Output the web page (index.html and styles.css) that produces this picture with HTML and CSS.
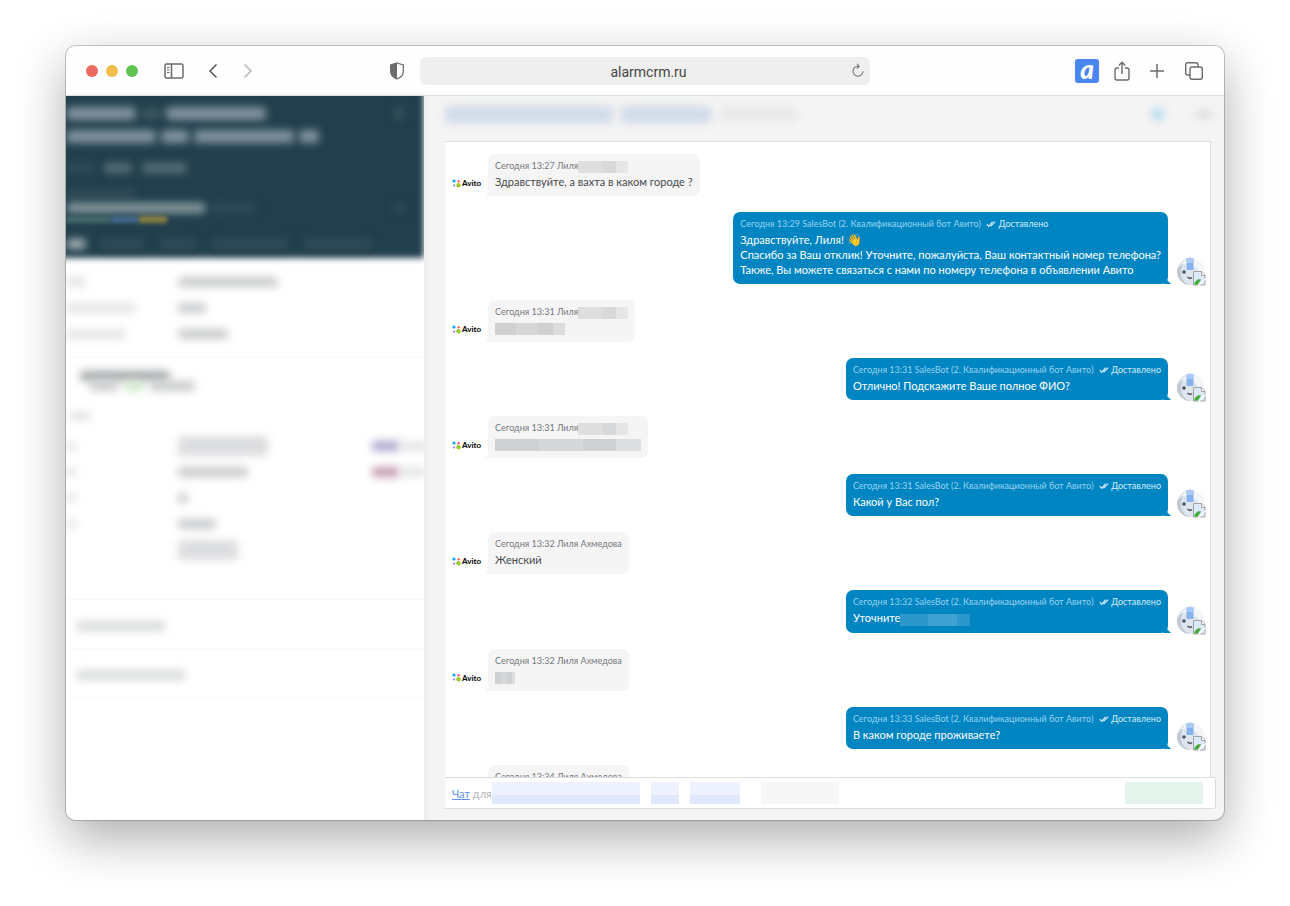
FILE: index.html
```html
<!DOCTYPE html>
<html lang="ru">
<head>
    <meta charset="utf-8">
    <title>alarmcrm.ru</title>
    <link rel="stylesheet" href="styles.css">
</head>
<body>
    <!-- shared icons -->
    <svg class="sprite" aria-hidden="true">
        <symbol id="avito" viewBox="0 0 9 9">
            <circle cx="2" cy="2" r="1.6" fill="#0af"/>
            <circle cx="6.6" cy="2.2" r="1.3" fill="#ff6163"/>
            <circle cx="2.1" cy="6.4" r="1" fill="#965eeb"/>
            <circle cx="6.5" cy="6.3" r="2.2" fill="#97cf26"/>
        </symbol>
        <symbol id="checks" viewBox="0 0 10 8">
            <path d="M.8 4.200l1.900 2.200L6.600 1.600M4.500 6.200L9.200 1.600" fill="none" stroke="currentColor" stroke-width="1.200"/>
        </symbol>
        <symbol id="robot" viewBox="0 0 30 30">
            <circle cx="14.500" cy="15.500" r="13.500" fill="#dfe5ec"/>
            <path d="M14 2a13 13 0 0 1 14 13c0 3-1 5-2 7C24 12 18 8 6 8c2-3 5-6 8-6z" fill="#f3f5f8"/>
            <path d="M1 15a13.500 13.500 0 0 0 13 14c-6-2-9-6-9-13 0-3 1-6 2-8-4 2-6 4-6 7z" fill="#c0cad5"/>
            <path d="M14 0l3 3h-6z" fill="#e3e8ee"/>
            <rect x="10.500" y="2" width="7" height="12" rx="1" fill="#86b2ee"/>
            <rect x="10.500" y="2" width="7" height="5" rx="1" fill="#a9caf5"/>
            <circle cx="8" cy="16" r="1.800" fill="#4a5663"/>
            <path d="M11.500 21q2.500 2.500 4.500.5" fill="none" stroke="#4a5663" stroke-width="1.500"/>
            <path d="M17.500 15.500h8l3.500 3.500v10h-11.500z" fill="#dce9fb" stroke="#a3a3a3"/>
            <path d="M25.500 15.500v4H29" fill="#fff" stroke="#a3a3a3"/>
            <path d="M18 28.500c1-4 4-6 7-5l-3 5z" fill="#47ab3b"/>
            <path d="M22.500 29.500l7-7" stroke="#fff" stroke-width="1.500"/>
        </symbol>
    </svg>

    <div class="window">
        <header class="toolbar">
            <div class="tools tools-left">
                <span class="dots"><i class="red"></i><i class="yellow"></i><i class="green"></i></span>
                <button type="button" class="tool sidebar-btn" aria-label="Боковая панель">
                    <svg width="20" height="16" viewBox="0 0 20 16" fill="none" stroke="#6b6b6b" stroke-width="1.500"><rect x="1" y="1" width="18" height="14" rx="1.500"/><path d="M7.500 1v14"/><path d="M3 4.500h2.500M3 7h2.500M3 9.500h2.500" stroke-width="1"/></svg>
                </button>
                <button type="button" class="tool back-btn" aria-label="Назад">
                    <svg width="10" height="16" viewBox="0 0 10 16" fill="none" stroke="#5c5c5c" stroke-width="1.600"><path d="M8.500 1.500L2 8l6.500 6.500"/></svg>
                </button>
                <button type="button" class="tool" aria-label="Вперёд">
                    <svg width="10" height="16" viewBox="0 0 10 16" fill="none" stroke="#b9b9b9" stroke-width="1.600"><path d="M1.500 1.500L8 8l-6.500 6.500"/></svg>
                </button>
                <button type="button" class="tool shield-btn" aria-label="Защита">
                    <svg width="14" height="18" viewBox="0 0 14 18"><path d="M7 1l6.300 2v6.500c0 3.500-2.500 6-6.300 7.500C3.200 15.500.7 13 .7 9.500V3z" fill="#fff" stroke="#6b6b6b" stroke-width="1.300"/><path d="M7 1L.7 3v6.500C.7 13 3.200 15.500 7 17z" fill="#6b6b6b"/></svg>
                </button>
            </div>
            <div class="address">
                <input type="text" value="alarmcrm.ru" aria-label="Адрес">
                <button type="button" class="tool reload" aria-label="Обновить">
                    <svg width="12" height="14" viewBox="0 0 12 14" fill="none" stroke="#757575" stroke-width="1.100"><path d="M7 3.200H6a5 5 0 1 0 5 5"/><path d="M4.800.8L7.300 3.200 4.800 5.700"/></svg>
                </button>
            </div>
            <div class="tools tools-right">
                <button type="button" class="tool ext" aria-label="Расширение">a</button>
                <button type="button" class="tool" aria-label="Поделиться">
                    <svg width="16" height="20" viewBox="0 0 16 20" fill="none" stroke="#6b6b6b" stroke-width="1.400"><path d="M5 7H3a2 2 0 0 0-2 2v8a2 2 0 0 0 2 2h10a2 2 0 0 0 2-2V9a2 2 0 0 0-2-2h-2M8 13V1.500M4.800 4.500L8 1.300l3.200 3.200"/></svg>
                </button>
                <button type="button" class="tool plus-btn" aria-label="Новая вкладка">
                    <svg width="14" height="14" viewBox="0 0 14 14" stroke="#6b6b6b" stroke-width="1.500"><path d="M7 0v14M0 7h14"/></svg>
                </button>
                <button type="button" class="tool" aria-label="Вкладки">
                    <svg width="18" height="18" viewBox="0 0 18 18" fill="none" stroke="#6b6b6b" stroke-width="1.400"><rect x="5" y="5" width="12.300" height="12.300" rx="2"/><path d="M5 13H2.700a2 2 0 0 1-2-2V2.700a2 2 0 0 1 2-2H11a2 2 0 0 1 2 2V5"/></svg>
                </button>
            </div>
        </header>

        <div class="page">
            <aside class="card">
                <div class="card-head">
                    <div class="line title"><i class="w70"></i><i class="w20 dim"></i><i class="w100"></i><i class="w10 dim end"></i></div>
                    <div class="line title"><i class="w90"></i><i class="w30"></i><i class="w100"></i><i class="w20"></i></div>
                    <div class="line tags"><i class="w30 dim"></i><i class="w30"></i><i class="w45"></i></div>
                    <div class="line small"><i class="w70 dim"></i></div>
                    <div class="line step"><i class="w140"></i><i class="w45 dim"></i><i class="w10 dim end"></i></div>
                    <div class="stages"><i class="w45 teal"></i><i class="w30 blue"></i><i class="w30 gold"></i></div>
                    <div class="line tabs"><i class="w20 active"></i><i class="w45 dim"></i><i class="w40 dim"></i><i class="w80 dim"></i><i class="w70 dim"></i></div>
                </div>
                <div class="fields">
                    <div class="field"><i class="w20 dim"></i><i class="w100"></i></div>
                    <div class="field"><i class="w70 dim"></i><i class="w30"></i></div>
                    <div class="field"><i class="w60 dim"></i><i class="w50"></i></div>
                </div>
                <div class="contact">
                    <div class="contact-name"><i class="w90 dark"></i></div>
                    <div class="contact-sub"><i class="w30"></i><i class="w20 lime"></i><i class="w45"></i></div>
                    <div class="contact-tab"><i class="w20 dim"></i></div>
                    <div class="field"><i class="w10 dim"></i><i class="w90 tall"></i><i class="w30 violet"></i><i class="w30 dim"></i></div>
                    <div class="field"><i class="w10 dim"></i><i class="w70"></i><i class="w30 plum"></i><i class="w30 dim"></i></div>
                    <div class="field"><i class="w10 dim"></i><i class="w10"></i></div>
                    <div class="field"><i class="w10 dim"></i><i class="w40"></i></div>
                    <div class="field"><span></span><i class="w60 tall"></i></div>
                </div>
                <div class="add"><i class="w90"></i></div>
                <div class="add"><i class="w110"></i></div>
            </aside>

            <main class="feed">
                <div class="filter">
                    <i class="w170 sky"></i><i class="w90 sky"></i><i class="w80"></i>
                    <i class="spot"></i><i class="more"></i>
                </div>

                <div class="messages">
                    <div class="msg in">
                        <span class="source"><svg width="9" height="9"><use href="#avito"/></svg>Avito</span>
                        <div class="bubble">
                            <div class="meta">Сегодня 13:27 Лиля<i class="mask w50"></i></div>
                            <p>Здравствуйте, а вахта в каком городе ?</p>
                        </div>
                    </div>
                    <div class="msg out">
                        <div class="bubble">
                            <div class="meta">Сегодня 13:29 SalesBot (2. Квалификационный бот Авито) <span class="status"><svg width="10" height="8"><use href="#checks"/></svg> Доставлено</span></div>
                            <p>Здравствуйте, Лиля! <span class="emoji">👋</span><br>Спасибо за Ваш отклик! Уточните, пожалуйста, Ваш контактный номер телефона?<br>Также, Вы можете связаться с нами по номеру телефона в объявлении Авито</p>
                        </div>
                        <svg class="avatar" width="30" height="30"><use href="#robot"/></svg>
                    </div>
                    <div class="msg in">
                        <span class="source"><svg width="9" height="9"><use href="#avito"/></svg>Avito</span>
                        <div class="bubble">
                            <div class="meta">Сегодня 13:31 Лиля<i class="mask w50"></i></div>
                            <p><i class="mask w70 deep"></i></p>
                        </div>
                    </div>
                    <div class="msg out">
                        <div class="bubble">
                            <div class="meta">Сегодня 13:31 SalesBot (2. Квалификационный бот Авито) <span class="status"><svg width="10" height="8"><use href="#checks"/></svg> Доставлено</span></div>
                            <p>Отлично! Подскажите Ваше полное ФИО?</p>
                        </div>
                        <svg class="avatar" width="30" height="30"><use href="#robot"/></svg>
                    </div>
                    <div class="msg in">
                        <span class="source"><svg width="9" height="9"><use href="#avito"/></svg>Avito</span>
                        <div class="bubble">
                            <div class="meta">Сегодня 13:31 Лиля<i class="mask w50"></i></div>
                            <p><i class="mask w145 deep"></i></p>
                        </div>
                    </div>
                    <div class="msg out">
                        <div class="bubble">
                            <div class="meta">Сегодня 13:31 SalesBot (2. Квалификационный бот Авито) <span class="status"><svg width="10" height="8"><use href="#checks"/></svg> Доставлено</span></div>
                            <p>Какой у Вас пол?</p>
                        </div>
                        <svg class="avatar" width="30" height="30"><use href="#robot"/></svg>
                    </div>
                    <div class="msg in">
                        <span class="source"><svg width="9" height="9"><use href="#avito"/></svg>Avito</span>
                        <div class="bubble">
                            <div class="meta">Сегодня 13:32 Лиля Ахмедова</div>
                            <p>Женский</p>
                        </div>
                    </div>
                    <div class="msg out">
                        <div class="bubble">
                            <div class="meta">Сегодня 13:32 SalesBot (2. Квалификационный бот Авито) <span class="status"><svg width="10" height="8"><use href="#checks"/></svg> Доставлено</span></div>
                            <p>Уточните<i class="mask w70 light"></i></p>
                        </div>
                        <svg class="avatar" width="30" height="30"><use href="#robot"/></svg>
                    </div>
                    <div class="msg in">
                        <span class="source"><svg width="9" height="9"><use href="#avito"/></svg>Avito</span>
                        <div class="bubble">
                            <div class="meta">Сегодня 13:32 Лиля Ахмедова</div>
                            <p><i class="mask w20 deep"></i></p>
                        </div>
                    </div>
                    <div class="msg out">
                        <div class="bubble">
                            <div class="meta">Сегодня 13:33 SalesBot (2. Квалификационный бот Авито) <span class="status"><svg width="10" height="8"><use href="#checks"/></svg> Доставлено</span></div>
                            <p>В каком городе проживаете?</p>
                        </div>
                        <svg class="avatar" width="30" height="30"><use href="#robot"/></svg>
                    </div>
                    <div class="msg in">
                        <div class="bubble last">
                            <div class="meta">Сегодня 13:34 Лиля Ахмедова</div>
                        </div>
                    </div>
                </div>

                <div class="compose">
                    <a href="#">Чат</a>&nbsp;<span>для</span>
                    <i class="tint long"></i><i class="tint w30"></i><i class="tint w50"></i><i class="tint w80 grey"></i>
                    <i class="tint w80 mint"></i>
                </div>
            </main>
        </div>
    </div>
</body>
</html>
```
FILE: styles.css
```css
* {
    box-sizing: border-box;
}
body {
    margin: 0;
    padding: 46px 66px 86px;
    min-height: 100vh;
    display: flex;
    background: #fff;
    font-family: Lato, "Noto Sans", sans-serif;
    font-size: 11px;
    color: #45494d;
}
.sprite {
    display: none;
}
.window {
    flex: 1;
    min-width: 0;
    height: calc(100vh - 132px);
    display: flex;
    flex-direction: column;
    border-radius: 10px;
    background: #f4f4f4;
    overflow: hidden;
    box-shadow: 0 0 0 1px rgba(0, 0, 0, 0.2), 0 18px 50px rgba(0, 0, 0, 0.33);
}

/* browser toolbar */
.toolbar {
    flex: none;
    height: 50px;
    padding: 1px 21px 0 20px;
    display: grid;
    grid-template-columns: minmax(0, 1fr) minmax(200px, 450px) minmax(0, 1fr);
    column-gap: 16px;
    align-items: center;
    background: #fefefe;
    border-bottom: 1px solid #dcdcdc;
}
.tools {
    display: flex;
    align-items: center;
}
.tools-right {
    justify-content: flex-end;
    gap: 20px;
}
.dots {
    display: flex;
    gap: 8px;
    margin-right: 26px;
}
.dots i {
    width: 12px;
    height: 12px;
    border-radius: 50%;
}
.red {
    background: #ec6a5e;
}
.yellow {
    background: #f0bf50;
}
.green {
    background: #61c554;
}
.tool {
    display: flex;
    padding: 0;
    border: none;
    background: none;
    cursor: pointer;
}
.sidebar-btn {
    margin-right: 24px;
}
.back-btn {
    margin-right: 25px;
}
.shield-btn {
    margin-left: auto;
}
.address {
    position: relative;
}
.address input {
    width: 100%;
    height: 28px;
    display: block;
    padding: 1px 0 0 8px;
    border: none;
    border-radius: 6px;
    background: #efefef;
    text-align: center;
    font-family: Roboto, sans-serif;
    font-size: 14px;
    color: #444;
}
.reload {
    position: absolute;
    right: 6px;
    top: 6px;
}
.ext {
    width: 24px;
    height: 24px;
    justify-content: center;
    align-items: center;
    margin-right: -5px;
    border-radius: 3px;
    background: #4a86f0;
    color: #fff;
    font: italic 900 26px/20px Lato, sans-serif;
    padding-bottom: 5px;
}
.plus-btn {
    margin-right: 1px;
}

.page {
    flex: 1;
    min-height: 0;
    display: flex;
}

/* lead card, everything in it is blurred */
.card {
    flex: 0 1 358px;
    background: #fff;
    overflow: hidden;
    box-shadow: 2px 0 6px #e8e8e8;
}
.card i, .filter i {
    display: block;
    flex: none;
    height: 10px;
    border-radius: 4px;
    background: #c8cacc;
    filter: blur(4px);
}
.card i.dim {
    background: #e4e5e6;
}
.card i.tall {
    height: 20px;
    background: #dcdddf;
}
.card-head {
    position: relative;
    z-index: 0;
    height: 161px;
    padding-top: 6px;
}
.card-head::before {
    content: "";
    position: absolute;
    z-index: -1;
    inset: -10px 0 -1px -10px;
    background: #213f4c;
    filter: blur(3px);
}
.line {
    display: flex;
    align-items: center;
    gap: 10px;
}
.card-head .line i {
    background: #5b7079;
}
.card-head .line i.dim {
    background: #314d59;
}
.card-head .line i.active {
    background: #a7b3b8;
}
.card-head .title i {
    height: 13px;
    background: #8494a0;
}
.card-head .title i.dim {
    background: #3a5560;
}
.title {
    height: 23px;
    gap: 5px;
}
.tags {
    height: 40px;
}
.small {
    height: 12px;
}
.step {
    height: 16px;
    gap: 5px;
}
.card-head .step i {
    background: #8d9ca3;
}
.card-head .step i.dim {
    background: #314d59;
}
.end {
    margin-left: auto;
    margin-right: 20px;
}
.stages {
    display: flex;
    height: 8px;
}
.card .stages i {
    height: 7px;
    border-radius: 0;
    filter: blur(2px);
}
.card .teal {
    background: #456b69;
}
.card .blue {
    background: #42698b;
}
.card .gold {
    background: #8a8143;
}
.tabs {
    height: 40px;
    gap: 14px;
}
.fields {
    padding-top: 12px;
    height: 101px;
    border-bottom: 1px solid #f9f9f9;
}
.field {
    display: grid;
    grid-template-columns: 112px 1fr 28px 24px;
    height: 26px;
    align-items: center;
}
.contact {
    height: 242px;
    padding-top: 13px;
    border-bottom: 1px solid #f9f9f9;
}
.contact-name {
    padding-left: 14px;
}
.contact-sub {
    display: flex;
    gap: 6px;
    padding-left: 24px;
}
.contact-tab {
    padding: 20px 0 12px 4px;
}
.card i.dark {
    background: #a3a6a8;
}
.card i.lime {
    background: #cde8ca;
}
.card i.violet {
    background: #a9a6cd;
}
.card i.plum {
    background: #c49ab0;
}
.add {
    height: 49px;
    display: flex;
    align-items: center;
    padding: 4px 0 0 10px;
    border-bottom: 1px solid #fafafa;
}
.card .add i {
    background: #d9dbdc;
}

/* feed */
.feed {
    flex: 1;
    min-width: 0;
    display: flex;
    flex-direction: column;
    padding: 0 8px 11px 21px;
}
.filter {
    height: 45px;
    flex: none;
    display: flex;
    align-items: center;
    gap: 8px;
    padding-bottom: 9px;
}
.filter i {
    height: 14px;
    background: #e8e8e9;
}
.filter i.sky {
    height: 17px;
    background: #cfdbe9;
}
.filter i.spot {
    width: 12px;
    height: 12px;
    margin-left: auto;
    background: #b5dcec;
}
.filter i.more {
    width: 16px;
    height: 8px;
    margin: 0 4px 0 24px;
    background: #d9d9d9;
}
.messages {
    flex: 1;
    min-height: 0;
    display: flex;
    flex-direction: column;
    gap: 16px;
    margin-right: 5px;
    padding: 12px 4px 0 7px;
    overflow: hidden;
    background: #fff;
    border-top: 1px solid #dcdcdc;
    border-right: 1px solid #e0e0e0;
}
.msg {
    flex: none;
    display: flex;
    align-items: flex-end;
}
.out {
    justify-content: flex-end;
}
.source {
    width: 36px;
    display: flex;
    align-items: center;
    gap: 1px;
    font-size: 8px;
    font-weight: 900;
    line-height: 10px;
    color: #111;
    margin-bottom: 8px;
}
.bubble {
    position: relative;
    min-height: 42px;
    padding: 4px 7px 7px;
    border-radius: 7px;
    line-height: 15px;
    background: #f5f5f5;
}
.bubble::after {
    content: "";
    position: absolute;
    left: -3px;
    bottom: 0;
    border: 4px solid transparent;
    border-bottom-color: #f5f5f5;
}
.bubble p {
    margin: 0;
}
.last {
    margin-left: 36px;
}
.out .bubble {
    background: #0085c3;
    color: #fff;
}
.out .bubble::after {
    left: auto;
    right: -3px;
    border-bottom-color: #0085c3;
}
.meta {
    font-size: 9px;
    line-height: 16px;
    color: #74787c;
}
.out .meta {
    color: #9ad3ef;
}
.out .status {
    margin-left: 3px;
    color: #d4edf9;
}
.status svg {
    vertical-align: -1px;
}
.emoji {
    font-size: 12px;
}
.avatar {
    margin: 0 0 -2px 8px;
}

/* hidden names and phone numbers */
.mask {
    display: inline-block;
    height: 12px;
    vertical-align: middle;
    background: linear-gradient(90deg, #dedede 0 50%, #d8d9da 50% 76%, #e6e6e6 76%);
}
.mask.deep {
    background: linear-gradient(90deg, #cfd0d2 0 30%, #d6d7d8 30% 60%, #cfd0d2 60% 83%, #dcddde 83%);
}
.mask.light {
    background: linear-gradient(90deg, #2b97cb 0 40%, #3fa2d2 40% 82%, #2b97cb 82%);
}

.compose {
    flex: none;
    height: 32px;
    display: flex;
    align-items: center;
    padding: 0 12px 0 7px;
    background: #fff;
    border: 1px solid #dcdcdc;
    border-left: none;
    border-radius: 0 3px 3px 0;
    color: #b4b4b4;
}
.compose a {
    color: #5f94ea;
}
.tint {
    height: 22px;
    margin-right: 11px;
    background: linear-gradient(#edf2fe 60%, #dfe8fd 60%);
}
.long {
    width: 148px;
}
.tint.grey {
    margin-left: 10px;
    background: #f7f7f7;
}
.tint.mint {
    margin: 0 0 0 auto;
    background: #e4f3ec;
}

.w10 { width: 10px; }
.w20 { width: 20px; }
.w30 { width: 28px; }
.w40 { width: 38px; }
.w45 { width: 45px; }
.w50 { width: 50px; }
.w60 { width: 60px; }
.w70 { width: 70px; }
.w80 { width: 78px; }
.w90 { width: 90px; }
.w100 { width: 100px; }
.w110 { width: 110px; }
.w140 { width: 140px; }
.w145 { width: 146px; }
.w170 { width: 168px; }
```
